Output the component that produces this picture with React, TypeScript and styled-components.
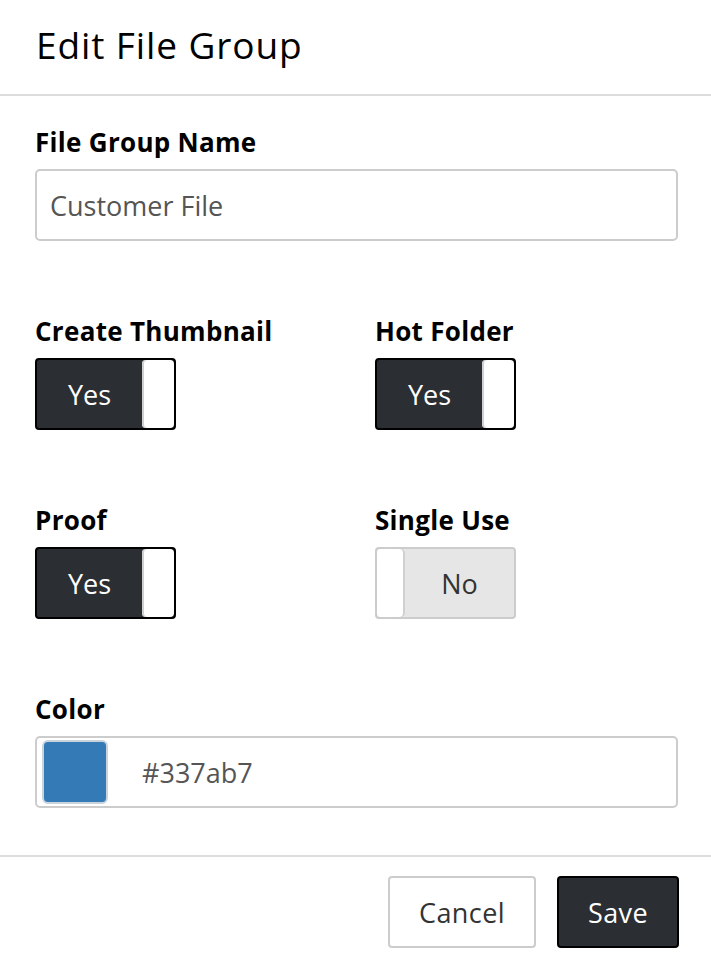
import React from 'react';
import styled, { createGlobalStyle } from 'styled-components';

const GlobalStyle = createGlobalStyle`
  html, body {
    margin: 0;
    padding: 0;
    background: #fff;
  }
  body {
    font-family: 'Open Sans', Lato, sans-serif;
    color: #000;
  }
`;

const Modal = styled.div`
  width: 711px;
  height: 963px;
  display: flex;
  flex-direction: column;
  background: #fff;
`;

const Header = styled.div`
  height: 96px;
  box-sizing: border-box;
  padding: 19px 36px 0;
  border-bottom: 2px solid #dddddd;
`;

const Title = styled.h1`
  margin: 0;
  font-size: 37px;
  font-weight: 400;
  line-height: 52px;
  letter-spacing: 0.9px;
`;

const Body = styled.div`
  flex: 1;
  padding: 28px 33px 0 35px;
  display: flex;
  flex-direction: column;
  gap: 72px;
`;

const Field = styled.div`
  display: flex;
  flex-direction: column;
`;

const Row = styled.div`
  display: grid;
  grid-template-columns: 340px 1fr;
`;

const Label = styled.label`
  font-size: 26px;
  font-weight: 700;
  line-height: 36px;
  height: 45px;
  letter-spacing: 0.3px;
`;

const TextBox = styled.div`
  height: 72px;
  box-sizing: border-box;
  border: 2px solid #cccccc;
  border-radius: 5px;
  display: flex;
  align-items: center;
  padding: 0 13px;
  font-size: 27px;
  color: #555;
`;

const ColorBox = styled(TextBox)`
  padding: 0 4px 0 5px;
  gap: 34px;
`;

const Swatch = styled.div<{ $color: string }>`
  width: 66px;
  height: 64px;
  box-sizing: border-box;
  border: 2px solid #c9d3dc;
  border-radius: 6px;
  background: ${p => p.$color};
`;

const Toggle = styled.div<{ $on: boolean }>`
  width: 141px;
  height: 72px;
  box-sizing: border-box;
  border: 2px solid ${p => (p.$on ? '#000' : '#cccccc')};
  border-radius: 4px;
  background: ${p => (p.$on ? '#2b2f33' : '#e6e6e6')};
  display: flex;
  flex-direction: ${p => (p.$on ? 'row' : 'row-reverse')};
  overflow: hidden;
`;

const ToggleText = styled.div<{ $on: boolean }>`
  flex: 1;
  display: flex;
  align-items: center;
  justify-content: center;
  font-size: 27px;
  color: ${p => (p.$on ? '#fff' : '#333')};
`;

const Knob = styled.div<{ $on: boolean }>`
  width: ${p => (p.$on ? '32px' : '28px')};
  background: #fff;
  border-radius: 4px;
  box-shadow: ${p => (p.$on ? 'inset 2px 0 0 #d0d0d0' : 'inset -2px 0 0 #d0d0d0')};
`;

const Footer = styled.div`
  height: 108px;
  box-sizing: border-box;
  border-top: 2px solid #dddddd;
  display: flex;
  justify-content: flex-end;
  align-items: flex-start;
  gap: 21px;
  padding: 19px 32px 0 0;
`;

const Button = styled.button<{ $primary?: boolean }>`
  height: 72px;
  box-sizing: border-box;
  padding: 0 29px;
  border-radius: 4px;
  font-family: inherit;
  font-size: 27px;
  letter-spacing: 0.4px;
  border: 2px solid ${p => (p.$primary ? '#000' : '#cccccc')};
  background: ${p => (p.$primary ? '#2b2f33' : '#fff')};
  color: ${p => (p.$primary ? '#fff' : '#333')};
`;

const Switch: React.FC<{ on: boolean }> = ({ on }) => (
  <Toggle $on={on}>
    <ToggleText $on={on}>{on ? 'Yes' : 'No'}</ToggleText>
    <Knob $on={on} />
  </Toggle>
);

const App: React.FC = () => {
  return (
    <>
      <GlobalStyle />
      <Modal>
        <Header>
          <Title>Edit File Group</Title>
        </Header>
        <Body>
          <Field>
            <Label>File Group Name</Label>
            <TextBox>Customer File</TextBox>
          </Field>
          <Row>
            <Field>
              <Label>Create Thumbnail</Label>
              <Switch on />
            </Field>
            <Field>
              <Label>Hot Folder</Label>
              <Switch on />
            </Field>
          </Row>
          <Row>
            <Field>
              <Label>Proof</Label>
              <Switch on />
            </Field>
            <Field>
              <Label>Single Use</Label>
              <Switch on={false} />
            </Field>
          </Row>
          <Field>
            <Label>Color</Label>
            <ColorBox>
              <Swatch $color="#337ab7" />
              #337ab7
            </ColorBox>
          </Field>
        </Body>
        <Footer>
          <Button>Cancel</Button>
          <Button $primary>Save</Button>
        </Footer>
      </Modal>
    </>
  );
};

export default App;
